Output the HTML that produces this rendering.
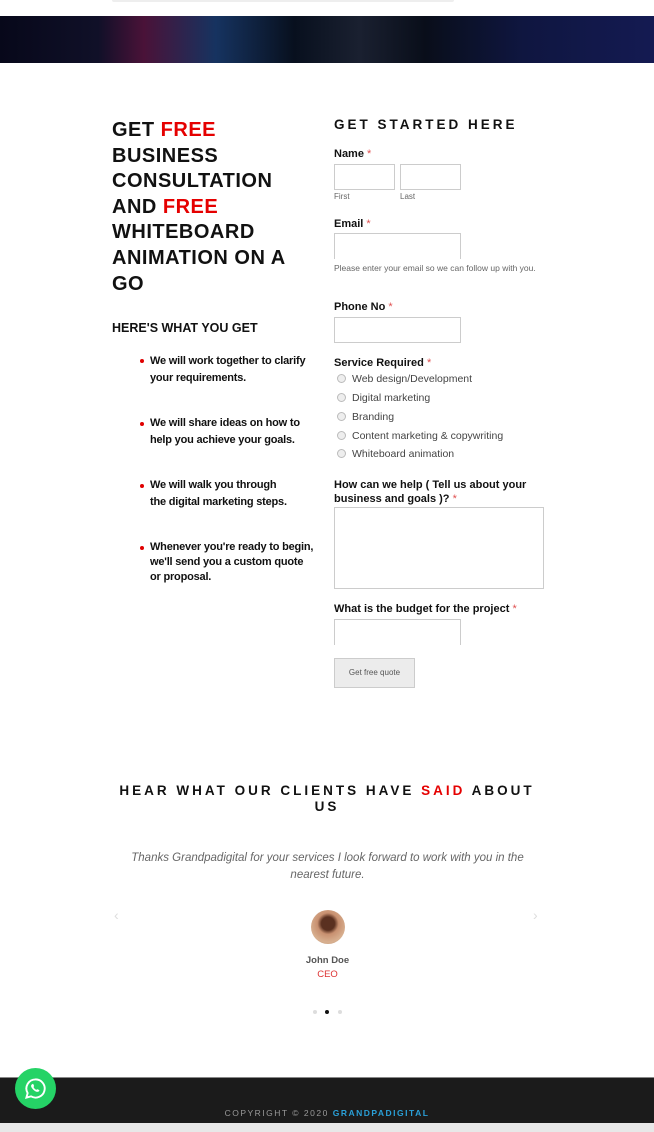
<!DOCTYPE html>
<html><head><meta charset="utf-8"><style>
*{box-sizing:border-box;margin:0;padding:0}
body{width:654px;height:1132px;background:#fff;font-family:"Liberation Sans",sans-serif;position:relative;overflow:hidden;color:#111}
.a{position:absolute}
.hero{top:16px;left:0;width:654px;height:47px;background:linear-gradient(90deg,#07081a 0%,#101028 15%,#4a1238 22%,#163360 33%,#08101e 45%,#1a2030 55%,#090e1a 65%,#0f1640 80%,#141a52 100%)}
.h1{left:112px;top:118px;font-size:20px;font-weight:bold;line-height:25.6px;letter-spacing:.5px;width:200px}
.r{color:#e50000}
.lbl{font-size:11px;font-weight:bold;color:#111}
.st{color:#e05050;font-weight:normal}
.inp{border:1px solid #ccc;height:26px;background:#fff}
.small{font-size:8px;color:#666}
.li{font-size:11px;font-weight:bold;line-height:17px;width:165px;left:150px;letter-spacing:-.2px}
.dot{width:4px;height:4px;border-radius:50%;background:#e00000;left:140px}
.rad{font-size:10.5px;color:#444;left:352px}
.rc{left:337px;width:9px;height:9px;border-radius:50%;border:1px solid #bbb;background:#eee}
</style></head><body>
<div class="a" style="left:112px;top:0;width:342px;height:2px;background:#eee;border-radius:0 0 4px 4px"></div>
<div class="a hero"></div>
<div class="a h1">GET <span class="r">FREE</span><br>BUSINESS<br>CONSULTATION<br>AND <span class="r">FREE</span><br>WHITEBOARD<br>ANIMATION ON A<br>GO</div>
<div class="a" style="left:112px;top:321px;font-size:12.5px;font-weight:bold">HERE'S WHAT YOU GET</div>
<div class="a dot" style="top:359px"></div><div class="a li" style="top:353px">We will work together to clarify your requirements.</div>
<div class="a dot" style="top:422px"></div><div class="a li" style="top:415px;width:170px">We will share ideas on how to help you achieve your goals.</div>
<div class="a dot" style="top:484px"></div><div class="a li" style="top:477px;width:145px">We will walk you through the digital marketing steps.</div>
<div class="a dot" style="top:546px"></div><div class="a li" style="top:540px;line-height:15px">Whenever you're ready to begin, we'll send you a custom quote or proposal.</div>

<div class="a" style="left:334px;top:117px;font-size:13.5px;font-weight:bold;letter-spacing:3px">GET STARTED HERE</div>
<div class="a lbl" style="left:334px;top:148px">Name <span class="st">*</span></div>
<div class="a inp" style="left:334px;top:164px;width:61px"></div>
<div class="a inp" style="left:400px;top:164px;width:61px"></div>
<div class="a small" style="left:334px;top:192px">First</div><div class="a small" style="left:400px;top:192px">Last</div>
<div class="a lbl" style="left:334px;top:218px">Email <span class="st">*</span></div>
<div class="a inp" style="left:334px;top:233px;width:127px;border-bottom:none"></div>
<div class="a small" style="left:334px;top:263px;width:205px;line-height:11px;font-size:8.5px">Please enter your email so we can follow up with you.</div>
<div class="a lbl" style="left:334px;top:301px">Phone No <span class="st">*</span></div>
<div class="a inp" style="left:334px;top:317px;width:127px"></div>
<div class="a lbl" style="left:334px;top:357px">Service Required <span class="st">*</span></div>
<div class="a rc" style="top:374px"></div><div class="a rad" style="top:373px">Web design/Development</div>
<div class="a rc" style="top:393px"></div><div class="a rad" style="top:392px">Digital marketing</div>
<div class="a rc" style="top:412px"></div><div class="a rad" style="top:411px">Branding</div>
<div class="a rc" style="top:431px"></div><div class="a rad" style="top:430px">Content marketing &amp; copywriting</div>
<div class="a rc" style="top:449px"></div><div class="a rad" style="top:448px">Whiteboard animation</div>
<div class="a lbl" style="left:334px;top:478px;width:200px;line-height:14px">How can we help ( Tell us about your business and goals )? <span class="st">*</span></div>
<div class="a inp" style="left:334px;top:507px;width:210px;height:82px"></div>
<div class="a lbl" style="left:334px;top:603px">What is the budget for the project <span class="st">*</span></div>
<div class="a inp" style="left:334px;top:619px;width:127px;border-bottom:none"></div>
<div class="a" style="left:334px;top:658px;width:81px;height:30px;background:#ececec;border:1px solid #ccc;font-size:8px;color:#555;text-align:center;line-height:28px">Get free quote</div>

<div class="a" style="left:112px;top:783px;width:430px;text-align:center;font-size:13.5px;font-weight:bold;letter-spacing:3px;line-height:16px">HEAR WHAT OUR CLIENTS HAVE <span class="r">SAID</span> ABOUT US</div>
<div class="a" style="left:130px;top:850px;width:395px;text-align:center;font-size:11.5px;font-style:italic;color:#666;line-height:17px">Thanks Grandpadigital for your services I look forward to work with you in the nearest future.</div>
<div class="a" style="left:114px;top:907px;color:#ddd;font-size:14px">‹</div>
<div class="a" style="left:533px;top:907px;color:#ddd;font-size:14px">›</div>
<div class="a" style="left:311px;top:910px;width:34px;height:34px;border-radius:50%;background:radial-gradient(circle at 50% 40%,#5a3020 0 25%,#c89070 40%,#d8b090 70%,#b89070)"></div>
<div class="a" style="left:300px;top:955px;width:55px;text-align:center;font-size:9.5px;font-weight:bold;color:#555">John Doe</div>
<div class="a" style="left:300px;top:969px;width:55px;text-align:center;font-size:9.5px;color:#d33">CEO</div>
<div class="a" style="left:313px;top:1010px;width:4px;height:4px;border-radius:50%;background:#ddd"></div>
<div class="a" style="left:325px;top:1010px;width:4px;height:4px;border-radius:50%;background:#111"></div>
<div class="a" style="left:338px;top:1010px;width:4px;height:4px;border-radius:50%;background:#ddd"></div>

<div class="a" style="left:0;top:1077px;width:654px;height:46px;background:#1b1b1b;border-top:1px solid #888"></div>
<div class="a" style="left:0;top:1123px;width:654px;height:9px;background:#e8e8e8"></div>
<div class="a" style="left:0;top:1108px;width:654px;text-align:center;font-size:8.5px;letter-spacing:1.5px;color:#999;height:10px;overflow:hidden">COPYRIGHT © 2020 <b style="color:#2aa0d8">GRANDPADIGITAL</b></div>
<div class="a" style="left:15px;top:1068px;width:41px;height:41px;border-radius:50%;background:#25d366"></div>
<svg class="a" style="left:24px;top:1077px" width="23" height="23" viewBox="0 0 24 24"><path d="M12 2.5a9.5 9.5 0 0 0-8.2 14.3L2.5 21.5l4.8-1.3A9.5 9.5 0 1 0 12 2.5z" fill="none" stroke="#fff" stroke-width="2"/><path d="M8.5 7.5c.5-.5 1.2-.3 1.4.3l.6 1.5c.1.4-.3.8-.6 1.1.6 1.3 1.7 2.4 3 3 .3-.3.7-.7 1.1-.6l1.5.6c.6.2.8.9.3 1.4-1 1-2.5 1-4 .1-1.6-1-2.9-2.3-3.8-3.8-.9-1.5-.8-3 .5-3.6z" fill="#fff"/></svg>
</body></html>
